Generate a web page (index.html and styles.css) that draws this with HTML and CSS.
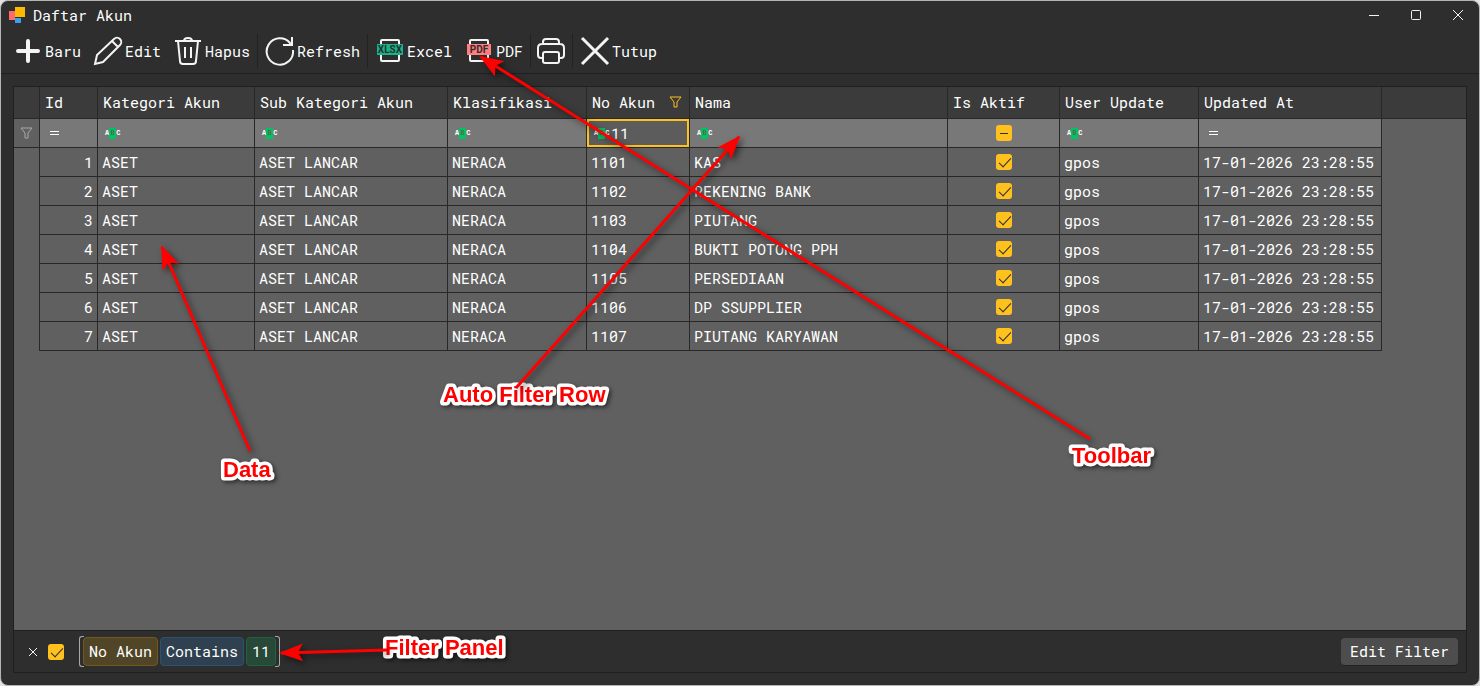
FILE: index.html
```html
<!DOCTYPE html>
<html lang="id">
<head>
    <meta charset="utf-8">
    <title>Daftar Akun</title>
    <link rel="stylesheet" href="styles.css">
</head>

<body>
<div class="window">
    <header class="titlebar">
        <svg class="app-icon" width="16" height="16" viewBox="0 0 16 16">
            <rect x="0" y="4" width="6" height="9" fill="#ff6b6b"/>
            <rect x="6" y="0" width="10" height="10" fill="#ffb900"/>
            <rect x="6" y="11" width="6" height="5" fill="#3a9ef0"/>
        </svg>
        <h1 class="title">Daftar Akun</h1>
        <button class="caption-btn" aria-label="Minimize">
            <svg width="12" height="12" viewBox="0 0 12 12"><path d="M1 6.5h10"/></svg>
        </button>
        <button class="caption-btn" aria-label="Maximize">
            <svg width="12" height="12" viewBox="0 0 12 12"><rect x="1.5" y="1.5" width="9" height="9" rx="1"/></svg>
        </button>
        <button class="caption-btn" aria-label="Close">
            <svg width="12" height="12" viewBox="0 0 12 12"><path d="M1 1l10 10M11 1L1 11"/></svg>
        </button>
    </header>

    <nav class="toolbar">
        <button class="tool">
            <svg width="32" height="32" viewBox="0 0 32 32"><path stroke-width="4" stroke-linecap="round" d="M16 6v20M6 16h20"/></svg>
            Baru
        </button>
        <button class="tool">
            <svg width="32" height="32" viewBox="0 0 32 32"><path d="M3 29l2-9L22 4a3.6 3.6 0 0 1 6 6L11 27zM20 6l6 6"/></svg>
            Edit
        </button>
        <button class="tool">
            <svg width="32" height="32" viewBox="0 0 32 32"><path d="M3 6h26M12 6q0-3 4-3t4 3M6 6l2 20q0 3 3 3h10q3 0 3-3l2-20M13 12v11M19 12v11"/></svg>
            Hapus
        </button>
        <span class="sep"></span>
        <button class="tool">
            <svg width="32" height="32" viewBox="0 0 32 32"><path d="M29 15A13.2 13.2 0 1 1 26 8l2 2M28 2v8h-9"/></svg>
            Refresh
        </button>
        <span class="sep"></span>
        <button class="tool">
            <svg width="32" height="32" viewBox="0 0 32 32">
                <rect x="7" y="5" width="18" height="21" rx="1"/>
                <rect class="xlsx" x="3" y="9" width="26" height="11"/>
                <text class="badge" x="16" y="18">XLSX</text>
            </svg>
            Excel
        </button>
        <button class="tool">
            <svg width="32" height="32" viewBox="0 0 32 32">
                <rect x="7" y="5" width="18" height="21" rx="1"/>
                <rect class="pdf" x="4" y="9" width="24" height="11"/>
                <text class="badge" x="16" y="18">PDF</text>
            </svg>
            PDF
        </button>
        <span class="sep"></span>
        <button class="tool icon-only" aria-label="Print">
            <svg width="32" height="32" viewBox="0 0 32 32"><path d="M8 23H6q-3 0-3-3v-7q0-4 4-4h18q4 0 4 4v7q0 3-3 3h-2M8 9V7q0-3 3-3h10q3 0 3 3v2"/><rect x="8" y="17" width="16" height="11" rx="2"/></svg>
        </button>
        <span class="sep"></span>
        <button class="tool">
            <svg width="32" height="32" viewBox="0 0 32 32"><path stroke-width="3" d="M3 3l26 26M29 3L3 29"/></svg>
            Tutup
        </button>
    </nav>

    <main class="grid">
        <div class="grid-body">
            <table class="accounts">
                <colgroup>
                    <col class="c-mark"><col class="c-id"><col class="c-kategori"><col class="c-sub"><col class="c-klas">
                    <col class="c-no"><col class="c-nama"><col class="c-aktif"><col class="c-user"><col class="c-updated"><col>
                </colgroup>
                <thead>
                    <tr>
                        <th></th>
                        <th>Id</th>
                        <th>Kategori Akun</th>
                        <th>Sub Kategori Akun</th>
                        <th>Klasifikasi</th>
                        <th>
                            <span class="filtered">No Akun
                                <svg class="funnel on" width="13" height="12" viewBox="0 0 13 12"><path d="M1 1h11L8 6v5H5V6z"/></svg>
                            </span>
                        </th>
                        <th>Nama</th>
                        <th>Is Aktif</th>
                        <th>User Update</th>
                        <th>Updated At</th>
                        <th></th>
                    </tr>
                    <tr class="filter-row">
                        <td class="mark"><svg class="funnel" width="13" height="12" viewBox="0 0 13 12"><path d="M1 1h11L8 6v5H5V6z"/></svg></td>
                        <td><label class="cell-filter"><span class="eq"></span><input type="text" aria-label="Filter Id"></label></td>
                        <td><label class="cell-filter"><span class="abc">A<b>B</b>C</span><input type="text" aria-label="Filter Kategori Akun"></label></td>
                        <td><label class="cell-filter"><span class="abc">A<b>B</b>C</span><input type="text" aria-label="Filter Sub Kategori Akun"></label></td>
                        <td><label class="cell-filter"><span class="abc">A<b>B</b>C</span><input type="text" aria-label="Filter Klasifikasi"></label></td>
                        <td class="active"><label class="cell-filter"><span class="abc">A<b>B</b>C</span><input type="text" value="11" aria-label="Filter No Akun"></label></td>
                        <td><label class="cell-filter"><span class="abc">A<b>B</b>C</span><input type="text" aria-label="Filter Nama"></label></td>
                        <td><input type="checkbox" class="tick mixed" aria-label="Filter Is Aktif"></td>
                        <td><label class="cell-filter"><span class="abc">A<b>B</b>C</span><input type="text" aria-label="Filter User Update"></label></td>
                        <td><label class="cell-filter"><span class="eq"></span><input type="text" aria-label="Filter Updated At"></label></td>
                        <td class="rest"></td>
                    </tr>
                </thead>
                <tbody id="accounts-body"></tbody>
            </table>
        </div>

        <footer class="filter-panel">
            <button class="clear" aria-label="Clear filter">
                <svg width="10" height="10" viewBox="0 0 10 10"><path d="M1 1l8 8M9 1L1 9"/></svg>
            </button>
            <input type="checkbox" class="tick" checked aria-label="Filter enabled">
            <div class="criteria">
                <button class="chip field">No Akun</button>
                <button class="chip operator">Contains</button>
                <button class="chip value">11</button>
            </div>
            <button class="edit-filter">Edit Filter</button>
        </footer>
    </main>

    <!-- callouts drawn over the form -->
    <svg class="callouts" width="1480" height="686" viewBox="0 0 1480 686">
        <defs>
            <marker id="head" markerUnits="userSpaceOnUse" markerWidth="24" markerHeight="18" refX="22" refY="9" orient="auto">
                <path d="M24 9L0 0l5 9-5 9z" fill="#f00"/>
            </marker>
        </defs>
        <g class="labels">
            <text x="223" y="477">Data</text>
            <text x="443" y="402">Auto Filter Row</text>
            <text x="1072" y="463">Toolbar</text>
            <text x="385" y="655">Filter Panel</text>
        </g>
        <g class="arrows">
            <path d="M250 451L162 247"/>
            <path d="M516 388L739 137"/>
            <path d="M1090 439L481 57"/>
            <path d="M387 650L281 653"/>
        </g>
    </svg>
</div>

<script>
    const accounts = [
        [1, '1101', 'KAS'],
        [2, '1102', 'REKENING BANK'],
        [3, '1103', 'PIUTANG'],
        [4, '1104', 'BUKTI POTONG PPH'],
        [5, '1105', 'PERSEDIAAN'],
        [6, '1106', 'DP SSUPPLIER'],
        [7, '1107', 'PIUTANG KARYAWAN'],
    ];

    const tableBody = document.getElementById('accounts-body');
    accounts.forEach(([id, no, nama]) => {
        const tr = document.createElement('tr');
        tr.innerHTML = `
            <td class="mark"></td>
            <td class="num">${id}</td>
            <td>ASET</td>
            <td>ASET LANCAR</td>
            <td>NERACA</td>
            <td>${no}</td>
            <td>${nama}</td>
            <td><input type="checkbox" class="tick" checked aria-label="Aktif ${no}"></td>
            <td>gpos</td>
            <td>17-01-2026 23:28:55</td>
            <td class="rest"></td>`;
        tableBody.appendChild(tr);
    });
</script>
</body>
</html>
```
FILE: styles.css
```css
* {
    box-sizing: border-box;
}

body {
    margin: 0;
    background: #e4e4e4;
    color: #fff;
    font: 15px/20px "Roboto Mono", "DejaVu Sans Mono", monospace;
}

button,
input {
    margin: 0;
    padding: 0;
    border: 0;
    background: none;
    color: inherit;
    font: inherit;
}

svg {
    display: block;
    flex: none;
    fill: none;
    stroke: #f4f4f4;
}

.window {
    position: relative;
    display: flex;
    flex-direction: column;
    min-height: 100vh;
    overflow: hidden;
    border: 1px solid #b4b6b4;
    border-radius: 8px;
    background: #2e2e2e;
}

/* title bar */
.titlebar {
    display: flex;
    align-items: center;
    height: 28px;
    padding-left: 8px;
}
.app-icon {
    stroke: none;
}
.title {
    flex: 1;
    margin: 0 0 0 8px;
    font-size: 15px;
    font-weight: normal;
}
.caption-btn {
    display: flex;
    align-items: center;
    justify-content: center;
    width: 42px;
    height: 28px;
}

/* toolbar */
.toolbar {
    display: flex;
    align-items: center;
    gap: 1px;
    height: 45px;
    padding: 0 0 1px 6px;
    border-bottom: 1px solid #202020;
}
.tool {
    display: flex;
    align-items: center;
    gap: 1px;
    height: 34px;
    padding: 0 5px;
}
.tool svg {
    stroke-width: 2;
}
.icon-only {
    padding: 0 3px;
}
.sep {
    width: 1px;
    height: 34px;
    margin-left: 1px;
    background: #222;
}
.tool .xlsx {
    fill: #16b589;
    stroke: none;
}
.tool .pdf {
    fill: #ff7f7f;
    stroke: none;
}
.tool .badge {
    fill: #2e2e2e;
    stroke: none;
    font: bold 10px Roboto, sans-serif;
    text-anchor: middle;
}

/* grid */
.grid {
    display: flex;
    flex: 1;
    flex-direction: column;
    margin: 12px;
    border: 1px solid #202020;
}
.grid-body {
    flex: 1;
    background: #606060;
}
.accounts {
    width: 100%;
    table-layout: fixed;
    border-spacing: 0;
}
.c-mark { width: 26px; }
.c-id { width: 58px; }
.c-kategori { width: 157px; }
.c-sub { width: 193px; }
.c-klas { width: 139px; }
.c-no { width: 103px; }
.c-nama { width: 258px; }
.c-aktif { width: 112px; }
.c-user { width: 139px; }
.c-updated { width: 183px; }

.accounts th,
.accounts td {
    height: 29px;
    padding: 0 4px;
    border-right: 1px solid #282828;
    border-bottom: 1px solid #282828;
    white-space: nowrap;
}
.accounts th {
    height: 32px;
    padding: 0 5px 2px;
    background: #3b3b3b;
    font-weight: normal;
    text-align: left;
}
.accounts th:last-child,
.accounts .rest {
    border-right: 0;
}
.accounts .rest,
.accounts tbody .mark {
    border-bottom: 0;
}
.accounts .num {
    text-align: right;
}
.filtered {
    display: flex;
    align-items: center;
    justify-content: space-between;
    padding-right: 2px;
}
.funnel {
    stroke: #aaa;
}
.funnel.on {
    stroke: #ffc11e;
}

/* auto filter row */
.filter-row td {
    background: #787878;
}
.filter-row .mark,
.filter-row .rest {
    background: #606060;
}
.filter-row .mark {
    padding: 0 6px;
}
.accounts .filter-row td:has(.cell-filter) {
    padding: 0;
}
.filter-row .active .cell-filter {
    background: #5c5c5c;
    outline: 2px solid #ffc11e;
    outline-offset: -2px;
}
.cell-filter {
    display: flex;
    align-items: center;
    height: 28px;
    padding: 0 4px 0 7px;
}
.cell-filter input {
    flex: 1;
    min-width: 0;
    outline: 0;
}
.abc {
    display: flex;
    align-items: center;
    width: 17px;
    font: bold 7px/11px "Liberation Mono", monospace;
}
.abc b {
    width: 7px;
    background: #00c462;
    color: #5a6a5a;
    text-align: center;
}
.eq {
    width: 9px;
    height: 4px;
    margin: 0 3px;
    border: solid #fff;
    border-width: 1px 0;
}

.tick {
    display: block;
    position: relative;
    width: 16px;
    height: 16px;
    border-radius: 3px;
    background: #ffc11e;
    appearance: none;
}
.accounts .tick {
    margin: 0 auto;
}
.tick:checked::before {
    content: "";
    position: absolute;
    top: 1px;
    left: 6px;
    width: 5px;
    height: 11px;
    border: solid #2e2e2e;
    border-width: 0 1px 1px 0;
    transform: rotate(43deg);
}
.tick.mixed::before {
    content: "";
    position: absolute;
    top: 8px;
    left: 4px;
    width: 8px;
    height: 1px;
    background: #2e2e2e;
}

/* filter panel */
.filter-panel {
    display: flex;
    align-items: center;
    height: 42px;
    padding: 0 8px 0 14px;
    border-top: 1px solid #202020;
}
.clear {
    margin-right: 10px;
}
.criteria {
    position: relative;
    display: flex;
    gap: 2px;
    margin-left: 15px;
    padding: 1px 4px;
}
.criteria::before,
.criteria::after {
    content: "";
    position: absolute;
    top: 0;
    bottom: 0;
    width: 4px;
    border: 1px solid #a8a8a8;
}
.criteria::before {
    left: 0;
    border-right: 0;
    border-radius: 3px 0 0 3px;
}
.criteria::after {
    right: 0;
    border-left: 0;
    border-radius: 0 3px 3px 0;
}
.chip {
    height: 29px;
    padding: 0 5px 2px;
    border: 1px solid;
    border-radius: 4px;
}
.field {
    border-color: #75591a;
    background: #514527;
}
.operator {
    border-color: #2b5371;
    background: #2f4150;
}
.value {
    border-color: #1c6540;
    background: #284838;
}
.edit-filter {
    height: 28px;
    margin-left: auto;
    padding: 0 9px;
    border-bottom: 1px solid #222;
    border-radius: 4px;
    background: #4d4d4d;
}

/* callouts */
.callouts {
    position: absolute;
    top: -1px;
    left: -1px;
    pointer-events: none;
}
.labels {
    fill: #f00;
    stroke: #fff;
    stroke-width: 7px;
    stroke-linejoin: round;
    paint-order: stroke;
    font: bold 22px "Liberation Sans", Arial, sans-serif;
    filter: drop-shadow(2px 2px 2px #0008);
}
.arrows {
    stroke: #f00;
    stroke-width: 3px;
    filter: drop-shadow(3px 3px 3px #0008);
}
.arrows path {
    marker-end: url(#head);
}
marker path {
    stroke: none;
}
```
